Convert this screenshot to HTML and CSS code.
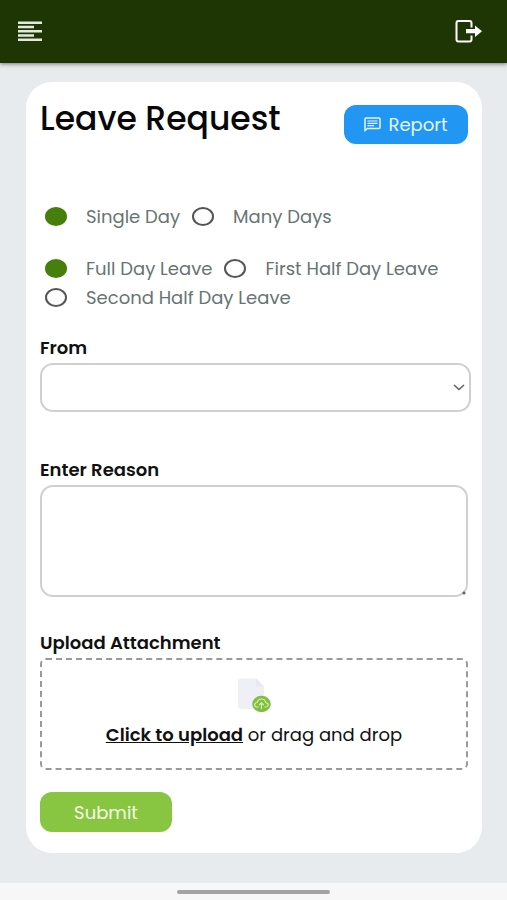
FILE: index.html
```html
<!DOCTYPE html>
<html lang="en">
<head>
<meta charset="utf-8">
<meta name="viewport" content="width=device-width, initial-scale=1">
<title>Leave Request</title>
<link rel="stylesheet" href="styles.css">
</head>
<body>
<header class="topbar">
  <button class="icon-button" type="button" aria-label="Menu">
    <svg width="24" height="22" viewBox="0 0 24 22" fill="#e3eadc"><path d="M0 0.500h24v2.600H0zM0 4.800h16v2.500H0zM0 9h24v2.600H0zM0 13.200h16v2.500H0zM0 17.500h24v2.600H0z"/></svg>
  </button>
  <button class="icon-button" type="button" aria-label="Log out">
    <svg width="27" height="24" viewBox="0 0 27 24"><path d="M16.500 7.500V3Q16.500 1 14.500 1H3.500Q1.500 1 1.500 3V19.500Q1.500 21.500 3.500 21.500H14.500Q16.500 21.500 16.500 19.500V15.500" fill="none" stroke="#fff" stroke-width="2"/><path d="M11 9h9V5.500l7 5.800-7 5.700V13.300h-9z" fill="#fff"/></svg>
  </button>
</header>
<main class="page">
  <form class="card">
    <div class="card-head">
      <h1 class="title">Leave Request</h1>
      <button class="button report" type="button">
        <svg width="17" height="15" viewBox="0 0 17 15" fill="none" stroke="#e6f5ff" stroke-width="1.500"><path d="M1 13.500V2Q1 1 2 1H15Q16 1 16 2V10.500Q16 11.500 15 11.500H3.500Z"/><path d="M3.500 4H13.500M3.500 6.300H13.500M3.500 8.600H10" stroke-width="1.200"/></svg>
        Report
      </button>
    </div>
    <div class="choices" role="radiogroup" aria-label="Duration">
      <label class="choice"><input type="radio" name="duration" checked>Single Day</label>
      <label class="choice"><input type="radio" name="duration">Many Days</label>
    </div>
    <div class="choices portion" role="radiogroup" aria-label="Leave type">
      <label class="choice"><input type="radio" name="portion" checked>Full Day Leave</label>
      <label class="choice"><input type="radio" name="portion">First Half Day Leave</label>
      <label class="choice"><input type="radio" name="portion">Second Half Day Leave</label>
    </div>
    <div class="field from">
      <label class="field-label" for="from">From</label>
      <div class="select-box">
        <select id="from"><option></option></select>
        <svg class="chevron" width="12" height="7" viewBox="0 0 12 7" fill="none" stroke="#606060" stroke-width="1.600"><path d="M1 1l5 4.500L11 1"/></svg>
      </div>
    </div>
    <div class="field reason">
      <label class="field-label" for="reason">Enter Reason</label>
      <textarea id="reason"></textarea>
    </div>
    <div class="field attachment">
      <span class="field-label" id="upload-label">Upload Attachment</span>
      <div class="dropzone" role="group" aria-labelledby="upload-label">
        <svg width="34" height="35" viewBox="0 0 34 35"><path d="M4 0.500H19L27 8.500V28Q27 31 24 31H4Q1 31 1 28V3.500Q1 0.500 4 0.500Z" fill="#eff0f5"/><path d="M19 0.500L27 8.500H21Q19 8.500 19 6.500Z" fill="#e6e8ed"/><ellipse cx="24.500" cy="26" rx="9.300" ry="8.200" fill="#83bd42"/><path d="M21.500 29H20Q17.300 28.500 17.800 26.200Q18.300 24.500 20.300 24.500Q21 21 24.500 21Q28.100 21 28.700 24.500Q31.300 25 31.200 27Q30.800 29 28.500 29H27.500M24.500 31V25M22.200 27L24.500 24.800L26.800 27" fill="none" stroke="#d5f2b2" stroke-width="1.200"/></svg>
        <p class="drop-text"><a href="#upload-label">Click to upload</a> or drag and drop</p>
      </div>
    </div>
    <button class="button submit" type="submit">Submit</button>
  </form>
</main>
<footer class="system-bar"><div class="handle"></div></footer>
</body>
</html>
```

FILE: styles.css
```css
* { box-sizing: border-box; }

body {
  margin: 0;
  min-height: 100vh;
  display: flex;
  flex-direction: column;
  background: #e7ebee;
  color: #111;
  font-family: Poppins, Inter, sans-serif;
  font-size: 18px;
}

button, select, textarea { font: inherit; }

.topbar {
  display: flex;
  justify-content: space-between;
  align-items: center;
  height: 63px;
  padding: 0 25px 0 18px;
  background: #1d3603;
  box-shadow: 0 1px 4px rgba(0, 0, 0, 0.5);
}

.icon-button {
  display: flex;
  padding: 0;
  border: 0;
  background: none;
}

.page {
  flex: 1;
  padding: 19px 25px 30px 26px;
}

.card {
  padding: 23px 14px 21px;
  border-radius: 26px;
  background: #fff;
}

.card-head {
  display: flex;
  justify-content: space-between;
  align-items: flex-start;
}

.title {
  margin: 0;
  font-size: 33px;
  line-height: 28px;
  font-weight: 500;
  color: #080808;
}

.button {
  display: flex;
  align-items: center;
  justify-content: center;
  gap: 7px;
  height: 39px;
  padding: 0;
  border: 0;
  border-radius: 12px;
}

.report {
  width: 124px;
  background: #2196f3;
  color: #e6f5ff;
}

.choices {
  display: flex;
  flex-wrap: wrap;
  column-gap: 12px;
  margin-top: 58px;
  padding-left: 5px;
  line-height: 29px;
  color: #687372;
}

.portion { margin-top: 23px; }

.choice {
  display: flex;
  align-items: center;
}

.choice input {
  appearance: none;
  width: 22px;
  height: 19px;
  margin: 0 19px 0 0;
  border: 2px solid #555;
  border-radius: 50%;
}

.choice input:checked {
  border-color: #467f0b;
  background: #467f0b;
}

.field {
  display: flex;
  flex-direction: column;
}

.field-label {
  line-height: 28px;
  padding-bottom: 1px;
  font-weight: 600;
}

.from { margin-top: 22px; }
.reason { margin-top: 44px; }
.attachment { margin-top: 32px; }

.select-box {
  display: grid;
  align-items: center;
  margin-right: -3px;
}

.select-box > * { grid-area: 1 / 1; }

select, textarea {
  width: 100%;
  border: 2px solid #d0d0d0;
  border-radius: 13px;
  background: #fff;
}

select {
  appearance: none;
  height: 49px;
  padding: 0 30px 0 12px;
}

.chevron {
  justify-self: end;
  margin-right: 6px;
  pointer-events: none;
}

textarea {
  height: 112px;
  padding: 10px 12px;
  resize: vertical;
}

textarea::-webkit-resizer {
  background: radial-gradient(circle at 13px 13px, #666 1px, transparent 2px);
}

.dropzone {
  display: flex;
  flex-direction: column;
  align-items: center;
  gap: 8px;
  padding: 18px 12px 19px;
  border: 2px dashed #999;
  border-radius: 6px;
}

.drop-text {
  margin: 0;
  line-height: 28px;
}

.drop-text a {
  color: #111;
  font-weight: 600;
}

.submit {
  width: 132px;
  height: 40px;
  margin-top: 22px;
  background: #88c540;
  color: #f4ffe8;
}

.system-bar {
  display: flex;
  justify-content: center;
  align-items: center;
  height: 17px;
  background: #f7f7f7;
}

.handle {
  width: 30%;
  height: 4px;
  border-radius: 2px;
  background: #a3a3a3;
}
```
